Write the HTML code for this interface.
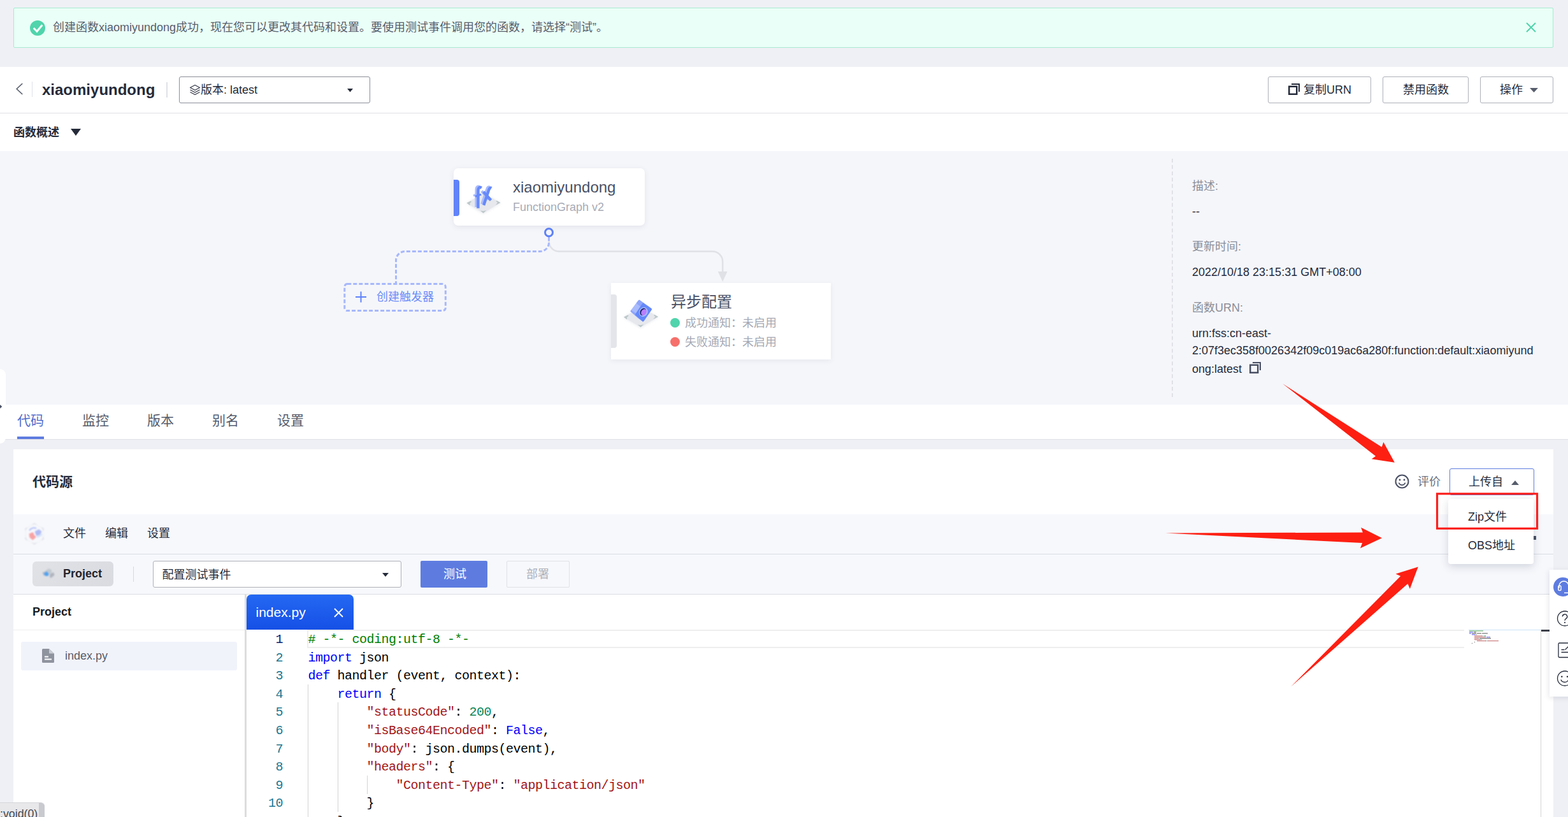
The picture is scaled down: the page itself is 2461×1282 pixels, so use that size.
<!DOCTYPE html>
<html lang="zh-CN">
<head>
<meta charset="utf-8">
<title>FunctionGraph</title>
<style>
*{box-sizing:border-box;margin:0;padding:0}
html,body{width:2461px;height:1282px;overflow:hidden}
body{position:relative;background:#eff0f5;font-family:"Liberation Sans","Noto Sans CJK SC",sans-serif;color:#252b3a;font-size:18px;line-height:1}
.a{position:absolute}
.t{position:absolute;white-space:nowrap;line-height:24px;height:24px}
.btn{position:absolute;top:120px;height:42px;border:1px solid #adb0b8;border-radius:3px;background:#fff}
svg{position:absolute;overflow:visible}
/* banner */
#banner{left:21px;top:12px;width:2417px;height:63px;background:#eafff7;border:1px solid #a8e9d2;border-radius:2px}
/* header */
#hdr{left:0;top:105px;width:2461px;height:73px;background:#fff;border-bottom:1px solid #dfe1e6}
#sec{left:0;top:178px;width:2461px;height:59px;background:#fff}
#ov{left:0;top:237px;width:2461px;height:398px;background:#f5f6fa}
#tabs{left:0;top:635px;width:2461px;height:55px;background:#fff;border-bottom:1px solid #dfe1e6}
#card{left:21px;top:705px;width:2417px;height:600px;background:#fff}
#menubar{left:21px;top:807px;width:2417px;height:63px;background:#f7f8fc;border-bottom:1px solid #d9dde3}
#toolbar{left:21px;top:870px;width:2417px;height:63px;background:#f7f8fc;border-bottom:1px solid #d9dde3}
.code{position:absolute;left:483.5px;font-family:"Liberation Mono",monospace;font-size:20px;letter-spacing:-0.5px;white-space:pre;line-height:28px;height:28px;color:#000}
.ln{position:absolute;left:394px;width:50px;text-align:right;font-family:"Liberation Mono",monospace;font-size:20px;letter-spacing:-0.5px;line-height:28px;height:28px;color:#237893}
.k{color:#0000ff}.s{color:#a31515}.c{color:#008000}.n{color:#098658}
</style>
</head>
<body>
<!-- banner -->
<div class="a" id="banner"></div>
<svg style="left:47px;top:32px" width="24" height="24" viewBox="0 0 24 24"><circle cx="12" cy="12" r="12" fill="#50d4ab"/><path d="M5.8 12l5.2 5.3 8.3-10" fill="none" stroke="#fff" stroke-width="3"/></svg>
<div class="t" style="left:83px;top:31px;color:#575d6c">创建函数</div><div class="t" style="left:155px;top:31px;color:#575d6c">xiaomiyundong</div><div class="t" style="left:276.08px;top:31px;color:#575d6c">成功，现在您可以更改其代码和设置。要使用测试事件调用您的函数，请选择</div><div class="t" style="left:888.08px;top:31px;color:#575d6c">“</div><div class="t" style="left:894.06px;top:31px;color:#575d6c">测试</div><div class="t" style="left:930.06px;top:31px;color:#575d6c">”</div><div class="t" style="left:936.06px;top:31px;color:#575d6c">。</div>
<svg style="left:2395px;top:35px" width="16" height="16" viewBox="0 0 16 16"><path d="M1 1l14 14M15 1L1 15" stroke="#50d4ab" stroke-width="2" fill="none"/></svg>

<!-- header -->
<div class="a" id="hdr"></div>
<svg style="left:24px;top:130px" width="14" height="20" viewBox="0 0 14 20"><path d="M11.2 1L2.2 9.5l9 8.5" fill="none" stroke="#575d6c" stroke-width="1.6"/></svg>
<div class="a" style="left:50px;top:128px;width:1px;height:24px;background:#dfe1e6"></div>
<div class="t" style="left:66px;top:126px;font-size:24px;font-weight:bold;line-height:30px;height:30px;color:#252b3a">xiaomiyundong</div>
<div class="a" style="left:260.5px;top:129px;width:2px;height:24px;background:#dfe1e6"></div>
<div class="btn" style="left:281px;width:300px;border-color:#8a8e99"></div>
<svg style="left:297px;top:132px" width="18" height="18" viewBox="0 0 18 18"><path d="M9 1.5L1.5 5.5 9 9.5l7.5-4zM1.5 9L9 13l7.5-4M1.5 12.5L9 16.5l7.5-4" fill="none" stroke="#353a48" stroke-width="1.25" stroke-linejoin="round"/></svg>
<div class="t" style="left:315px;top:129px">版本</div><div class="t" style="left:351px;top:129px">:</div>
<div class="t" style="left:361px;top:129px">latest</div>
<svg style="left:544.5px;top:138.5px" width="9" height="5.5" viewBox="0 0 10 6"><path d="M0 0h10L5 6z" fill="#252b3a"/></svg>

<div class="btn" style="left:1990px;width:162px"></div>
<svg style="left:2022px;top:131px" width="18" height="18" viewBox="0 0 18 18"><path d="M5 1h12v12" fill="none" stroke="#252b3a" stroke-width="2"/><rect x="1.25" y="4.75" width="12" height="12" fill="none" stroke="#252b3a" stroke-width="2.5"/></svg>
<div class="t" style="left:2046px;top:129px">复制</div><div class="t" style="left:2082px;top:129px">URN</div>
<div class="btn" style="left:2170px;width:135px"></div>
<div class="t" style="left:2202px;top:129px">禁用函数</div>
<div class="btn" style="left:2323px;width:115px"></div>
<div class="t" style="left:2354px;top:129px">操作</div>
<svg style="left:2401px;top:138px" width="13" height="7" viewBox="0 0 13 7"><path d="M0 0h13L6.5 7z" fill="#575d6c"/></svg>

<!-- section title -->
<div class="a" id="sec"></div>
<div class="t" style="left:21px;top:196px;font-weight:bold">函数概述</div>
<svg style="left:111px;top:202px" width="16" height="11" viewBox="0 0 16 11"><path d="M0 0h16L8 11z" fill="#252b3a"/></svg>

<!-- overview -->
<div class="a" id="ov"></div>

<!-- overview graph -->
<svg style="left:0;top:0" width="2461" height="1282" viewBox="0 0 2461 1282">
  <path d="M861.5 372V378.5a16 16 0 0 0 16 16H1118.2a16 16 0 0 1 16 16V428" fill="none" stroke="#dfe1e6" stroke-width="2.5"/>
  <path d="M861.5 372V380.5a14 14 0 0 1 -14 14H635.5a14 14 0 0 0 -14 14V444" fill="none" stroke="#a7b8fb" stroke-width="3" stroke-dasharray="6 3"/>
  <path d="M1126.8 426h14.8l-7.4 16z" fill="#dfe1e6"/>
  <rect x="540.8" y="445.6" width="158.5" height="42" rx="4.5" fill="none" stroke="#a7b8fb" stroke-width="3" stroke-dasharray="6 3"/>
  <path d="M558 466h17M566.5 457.5v17" stroke="#5e82f8" stroke-width="2" fill="none"/>
  <circle cx="861.5" cy="364.7" r="6" fill="#f5f6fa" stroke="#5e82f8" stroke-width="3"/>
</svg>
<div class="t" style="left:591px;top:454px;color:#6b8cf9">创建触发器</div>

<div class="a" style="left:712px;top:264px;width:300px;height:90px;background:#fff;border-radius:7px;box-shadow:0 2px 8px rgba(60,70,100,.10)"></div>
<div class="a" style="left:712px;top:282px;width:9px;height:57px;background:#6083f9;border-radius:0 4px 4px 0"></div>
<div class="t" style="left:805px;top:279px;font-size:24px;line-height:30px;height:30px;color:#4a5064">xiaomiyundong</div>
<div class="t" style="left:805px;top:313px;color:#a7abb6">FunctionGraph v2</div>

<div class="a" style="left:959px;top:444px;width:345px;height:120px;background:#fff;box-shadow:0 2px 8px rgba(60,70,100,.08)"></div>
<div class="a" style="left:959px;top:462px;width:9px;height:84px;background:#e3e5ea;border-radius:0 4px 4px 0"></div>
<div class="t" style="left:1053px;top:459px;font-size:24px;line-height:30px;height:30px;color:#4a5064">异步配置</div>
<div class="a" style="left:1052px;top:499px;width:15px;height:15px;border-radius:50%;background:#50d4ab"></div>
<div class="a" style="left:1052px;top:529px;width:15px;height:15px;border-radius:50%;background:#f66f6a"></div>
<div class="t" style="left:1075px;top:495px;color:#a5a9b4">成功通知：未启用</div>
<div class="t" style="left:1075px;top:525px;color:#a5a9b4">失败通知：未启用</div>


<!-- fx icon -->
<svg style="left:725px;top:280px" width="70" height="65" viewBox="0 0 70 65">
  <defs><filter id="bl"><feGaussianBlur stdDeviation="2.2"/></filter></defs>
  <path d="M7 39L34 24 61 38.5 33.5 55.5z" fill="#dfe2e8" filter="url(#bl)" opacity=".7"/>
  <path d="M7.5 38.5L34 23.5 60.5 38 33.5 54.5z" fill="#e6e8ed"/>
  <path d="M7.5 38.5l6.5-3.3 1 1.5-2.5 2.2 .2 3.6z" fill="#bcc7c9"/>
  <path d="M60.5 38l-6-3.2-.8 1.3 2.3 2-3.3 3.9z" fill="#bcc7c9"/>
  <path d="M33.5 54.5l-4.5-4 4.3.8 5-1.3z" fill="#bcc7c9"/>
  <g fill="none" stroke-linejoin="round">
    <g transform="translate(-2.8 -1.2)" stroke="#a9bbfc">
      <path d="M30.8 14.8C28 13 25.5 14.5 25.5 19L25.4 46.3" stroke-width="4.4"/>
      <path d="M20.8 28.2L30.2 24.9" stroke-width="3.2"/>
      <path d="M46.5 15C43.5 13.5 42.6 17 41.6 20L34.2 41.6" stroke-width="4.4"/>
      <path d="M33.8 21L45.5 34.3" stroke-width="4.4"/>
    </g>
    <g stroke="#6689fa">
      <path d="M30.8 14.8C28 13 25.5 14.5 25.5 19L25.4 46.8" stroke-width="4.4"/>
      <path d="M20.8 28.2L30.2 24.9" stroke-width="3.2"/>
      <path d="M46.5 15C43.5 13.5 42.6 17 41.6 20L34.2 42" stroke-width="4.4"/>
      <path d="M33.8 21L45.5 34.3" stroke-width="4.4"/>
    </g>
  </g>
</svg>
<!-- async icon -->
<svg style="left:972px;top:460px" width="70" height="65" viewBox="0 0 70 65">
  <path d="M6.5 38L34 23 61.5 37.5 33.5 54.5z" fill="#dfe2e8" filter="url(#bl)" opacity=".7"/>
  <path d="M7 37.5L34 22.5 61 37 33.5 53.5z" fill="#e6e8ed"/>
  <path d="M7 37.5l6.5-3.3 1 1.5-2.5 2.2 .2 3.6z" fill="#bcc7c9"/>
  <path d="M61 37l-6-3.2-.8 1.3 2.3 2-3.3 3.9z" fill="#bcc7c9"/>
  <path d="M33.5 53.5l-4.5-4 4.3.8 5-1.3z" fill="#bcc7c9"/>
  <g stroke-linejoin="round" stroke-width="3">
    <path d="M31.2 12L37.5 16.5 49.5 25.2 37.2 43 30.5 38.2 19 28.2z" fill="#a9bbfc" stroke="#a9bbfc"/>
    <path d="M37.2 43L25.8 33.3 19 28.2 30.5 38.2z" fill="#8ea5fa" stroke="#8ea5fa" stroke-width="2.5"/>
    <path d="M31.2 12L37.5 16.5 34.8 20.5 28.2 15.8z" fill="#8ea5fa" stroke="#8ea5fa" stroke-width="2.5"/>
    <path d="M37.6 17.3L49.3 25.3 37.2 42.8 26.8 33.4z" fill="#6488fa" stroke="#6488fa" stroke-width="3.4"/>
  </g>
  <ellipse cx="37.8" cy="29.5" rx="6.6" ry="7.6" transform="rotate(30 37.8 29.5)" fill="#a9bbfc"/>
  <ellipse cx="37.2" cy="29.3" rx="4.6" ry="6" transform="rotate(30 37.2 29.3)" fill="#1f2470"/>
  <ellipse cx="38.5" cy="30" rx="4" ry="5.2" transform="rotate(30 38.5 30)" fill="#b97dff"/>
</svg>
<!-- info panel -->
<div class="a" style="left:1839px;top:249px;width:0;height:374px;border-left:2px dashed #dfe1e6"></div>
<div class="t" style="left:1871px;top:280px;color:#8a8e99">描述</div><div class="t" style="left:1907px;top:280px;color:#8a8e99">:</div>
<div class="t" style="left:1871px;top:320px">--</div>
<div class="t" style="left:1871px;top:375px;color:#8a8e99">更新时间</div><div class="t" style="left:1943px;top:375px;color:#8a8e99">:</div>
<div class="t" style="left:1871px;top:415px">2022/10/18 23:15:31 GMT+08:00</div>
<div class="t" style="left:1871px;top:471px;color:#8a8e99">函数</div><div class="t" style="left:1907px;top:471px;color:#8a8e99">URN:</div>
<div class="t" style="left:1871px;top:511px">urn:fss:cn-east-</div>
<div class="t" style="left:1871px;top:538px">2:07f3ec358f0026342f09c019ac6a280f:function:default:xiaomiyund</div>
<div class="t" style="left:1871px;top:567px">ong:latest</div>
<svg style="left:1961px;top:568px" width="18" height="18" viewBox="0 0 18 18"><path d="M5 1h12v12" fill="none" stroke="#4a5064" stroke-width="2"/><rect x="1.25" y="4.75" width="12" height="12" fill="none" stroke="#4a5064" stroke-width="2.5"/></svg>
<div class="a" id="tabs"></div>

<!-- left handle -->
<div class="a" style="left:-10px;top:579px;width:19px;height:117px;background:#fff;border-radius:0 9px 9px 0"></div>
<svg style="left:0;top:635px" width="4" height="6" viewBox="0 0 4 6"><path d="M0 0l3.3 3L0 6z" fill="#4a5064"/></svg>
<!-- tabs -->
<div class="t" style="left:27px;top:647px;font-size:21px;line-height:26px;height:26px;color:#526ecc">代码</div>
<div class="t" style="left:129px;top:647px;font-size:21px;line-height:26px;height:26px;color:#575d6c">监控</div>
<div class="t" style="left:231px;top:647px;font-size:21px;line-height:26px;height:26px;color:#575d6c">版本</div>
<div class="t" style="left:333px;top:647px;font-size:21px;line-height:26px;height:26px;color:#575d6c">别名</div>
<div class="t" style="left:435px;top:647px;font-size:21px;line-height:26px;height:26px;color:#575d6c">设置</div>
<div class="a" style="left:27px;top:685px;width:42px;height:4px;background:#5e7ce0"></div>
<div class="a" id="card"></div>
<div class="t" style="left:51px;top:743px;font-size:21px;font-weight:bold;line-height:26px;height:26px;color:#252b3a">代码源</div>
<svg style="left:2189px;top:744px" width="23" height="23" viewBox="0 0 23 23"><circle cx="11.5" cy="11.5" r="10" fill="none" stroke="#4a5064" stroke-width="2"/><circle cx="8" cy="9" r="1.4" fill="#4a5064"/><circle cx="15" cy="9" r="1.4" fill="#4a5064"/><path d="M6.5 13.5a5.3 5.3 0 0 0 10 0" fill="none" stroke="#4a5064" stroke-width="1.8"/></svg>
<div class="t" style="left:2225px;top:744px;color:#6b7080">评价</div>
<div class="a" style="left:2275px;top:735px;width:133px;height:42px;border:1px solid #5e7ce0;border-radius:3px;background:#fff"></div>
<div class="t" style="left:2305px;top:744px;color:#252b3a">上传自</div>
<svg style="left:2372px;top:754px" width="12" height="7" viewBox="0 0 12 7"><path d="M0 7h12L6 0z" fill="#575d6c"/></svg>

<div class="a" id="menubar"></div>

<svg style="left:36px;top:818px" width="38" height="40" viewBox="0 0 38 40">
  <defs><filter id="b1"><feGaussianBlur stdDeviation="0.8"/></filter></defs>
  <g filter="url(#b1)">
  <path d="M18 3.5L31.8 11.5V28L18 35.7 4.3 28V11.5z" fill="none" stroke="#eeeff3" stroke-width="1"/>
  <path d="M15 5.2L18 3.5l3 1.7M29.2 10l2.6 1.5v3M31.8 25v3l-2.6 1.5M21 34L18 35.7 15 34M6.9 29.5L4.3 28v-3M4.3 14.5v-3L6.9 10" fill="none" stroke="#dcdde3" stroke-width="1.4"/>
  <path d="M10 14.5c3-4 7-5 11-3.5" fill="none" stroke="#9db0f8" stroke-width="2" opacity=".8"/>
  <path d="M9.5 19.5l6.5-2.5 2 5 3 2.5-5.5 5-5-4z" fill="#f87575" opacity=".65"/>
  <path d="M18.5 16l6.5-3.5 4.5 3.5-2.5 5.5-6 1.5z" fill="#8b9af0" opacity=".65"/>
  <path d="M22 25l8-4.5" stroke="#cfe0fb" stroke-width="3" opacity=".8"/>
  </g>
</svg>
<div class="t" style="left:99px;top:825px;color:#252b3a">文件</div>
<div class="t" style="left:165px;top:825px;color:#252b3a">编辑</div>
<div class="t" style="left:231px;top:825px;color:#252b3a">设置</div>
<div class="a" style="left:2407px;top:841px;width:4px;height:6px;background:#4a5064"></div>

<div class="a" id="toolbar"></div>
<div class="a" style="left:51px;top:881px;width:127px;height:39px;background:linear-gradient(135deg,#e0e2e6,#d9dbe0);border-radius:6px"></div>

<svg style="left:63px;top:888px" width="26" height="24" viewBox="0 0 26 24">
  <g filter="url(#b1)">
  <path d="M8.5 7.5l5-3.5 4.5 2.5v4l-5 3.5-4.5-2.5z" fill="#c4cbd0"/>
  <path d="M3.5 10.5l5-2 .5 5.5-3 1.5z" fill="#b3b7c1"/>
  <path d="M15.5 12.5l5.5-2.5 1.5 4.5-5.5 4.5-2-1.5z" fill="#b0b4be"/>
  <path d="M6.5 11l4-2.5 3 3.5-.5 3.5-4 .5-3-2.5z" fill="#4ea2ee"/>
  </g>
</svg>
<div class="t" style="left:99px;top:888px;font-weight:bold;color:#1f242e">Project</div>
<div class="a" style="left:209px;top:889px;width:1px;height:24px;background:#d5d8df"></div>
<div class="a" style="left:240px;top:880px;width:390px;height:42px;border:1px solid #adb0b8;border-radius:3px;background:#fff"></div>
<div class="t" style="left:254.5px;top:890px;color:#252b3a">配置测试事件</div>
<svg style="left:600px;top:899px" width="10" height="6" viewBox="0 0 10 6"><path d="M0 0h10L5 6z" fill="#252b3a"/></svg>
<div class="a" style="left:660px;top:880px;width:105px;height:42px;background:#5e7ce0;border-radius:2px"></div>
<div class="t" style="left:696px;top:889px;color:#fff">测试</div>
<div class="a" style="left:795px;top:880px;width:99px;height:42px;border:1px solid #dfe1e6;border-radius:2px;background:#f7f8fc"></div>
<div class="t" style="left:826px;top:889px;color:#adb0b8">部署</div>

<!-- left panel -->
<div class="t" style="left:51px;top:948px;font-weight:bold;color:#1a1a1a">Project</div>
<div class="a" style="left:21px;top:988px;width:363px;height:1px;background:#eeeeee"></div>
<div class="a" style="left:33px;top:1007px;width:339px;height:45px;background:#f1f3fb;border-radius:3px"></div>
<svg style="left:66px;top:1018px" width="19" height="22" viewBox="0 0 19 22"><path d="M1.5 0H11l8 7.5V20.5A1.5 1.5 0 0 1 17.5 22h-16A1.5 1.5 0 0 1 0 20.5v-19A1.5 1.5 0 0 1 1.5 0z" fill="#8f939e"/><path d="M11 0v6.5a1 1 0 0 0 1 1h7z" fill="#c9ccd3"/><path d="M4 12.5h6M4 16.5h11" stroke="#fff" stroke-width="1.8"/></svg>
<div class="t" style="left:102px;top:1017px;color:#575d6c">index.py</div>
<div class="a" style="left:384px;top:933px;width:3px;height:360px;background:#dddddd"></div>
<!-- editor tab -->
<div class="a" style="left:387px;top:933px;width:168px;height:55px;border-radius:7px 7px 0 0;background:linear-gradient(#2468f2,#1650e6)"></div>
<div class="t" style="left:401.5px;top:948px;font-size:21px;line-height:26px;height:26px;color:#fff">index.py</div>
<svg style="left:523.5px;top:953.5px" width="15" height="15" viewBox="0 0 15 15"><path d="M1 1l13 13M14 1L1 14" stroke="#fff" stroke-width="2" fill="none"/></svg>
<!-- editor -->
<div class="a" style="left:482px;top:988px;width:1816px;height:28.5px;border:2.5px solid #eeeeee;border-right:0"></div>
<div class="a" style="left:2305px;top:988px;width:114px;height:1px;background:#c9e2f6"></div>
<div class="a" style="left:2418px;top:988px;width:1px;height:300px;background:#d4d4d4"></div>
<div class="a" style="left:2419px;top:988px;width:13px;height:3px;background:#3c4049"></div>
<div class="a" style="left:483px;top:1074px;width:1px;height:220px;background:#d3d3d3"></div>
<div class="a" style="left:529.5px;top:1102px;width:1px;height:172px;background:#d3d3d3"></div>
<div class="a" style="left:576px;top:1216.5px;width:1px;height:29px;background:#d3d3d3"></div>
<div class="ln" style="top:990.0px;color:#0b216f">1</div><div class="code" style="top:990.0px"><span class="c"># -*- coding:utf-8 -*-</span></div>
<div class="ln" style="top:1018.6px">2</div><div class="code" style="top:1018.6px"><span class="k">import</span> json</div>
<div class="ln" style="top:1047.2px">3</div><div class="code" style="top:1047.2px"><span class="k">def</span> handler (event, context):</div>
<div class="ln" style="top:1075.8px">4</div><div class="code" style="top:1075.8px">    <span class="k">return</span> {</div>
<div class="ln" style="top:1104.4px">5</div><div class="code" style="top:1104.4px">        <span class="s">"statusCode"</span>: <span class="n">200</span>,</div>
<div class="ln" style="top:1133.0px">6</div><div class="code" style="top:1133.0px">        <span class="s">"isBase64Encoded"</span>: <span class="k">False</span>,</div>
<div class="ln" style="top:1161.6px">7</div><div class="code" style="top:1161.6px">        <span class="s">"body"</span>: json.dumps(event),</div>
<div class="ln" style="top:1190.2px">8</div><div class="code" style="top:1190.2px">        <span class="s">"headers"</span>: {</div>
<div class="ln" style="top:1218.8px">9</div><div class="code" style="top:1218.8px">            <span class="s">"Content-Type"</span>: <span class="s">"application/json"</span></div>
<div class="ln" style="top:1247.4px">10</div><div class="code" style="top:1247.4px">        }</div>
<div class="ln" style="top:1276.0px">11</div><div class="code" style="top:1276.0px">    }</div>

<svg style="left:2306px;top:988.5px" width="60" height="24" viewBox="0 0 60 24" opacity=".55"><rect x="0" y="0.40" width="22" height="1.2" fill="#008000"/><rect x="0" y="2.35" width="6" height="1.2" fill="#0000ff"/><rect x="7" y="2.35" width="4" height="1.2" fill="#000"/><rect x="0" y="4.30" width="3" height="1.2" fill="#0000ff"/><rect x="4" y="4.30" width="7" height="1.2" fill="#000"/><rect x="12" y="4.30" width="7" height="1.2" fill="#000"/><rect x="20" y="4.30" width="9" height="1.2" fill="#000"/><rect x="4" y="6.25" width="6" height="1.2" fill="#0000ff"/><rect x="11" y="6.25" width="1" height="1.2" fill="#000"/><rect x="8" y="8.20" width="12" height="1.2" fill="#a31515"/><rect x="20" y="8.20" width="1" height="1.2" fill="#000"/><rect x="22" y="8.20" width="3" height="1.2" fill="#098658"/><rect x="25" y="8.20" width="1" height="1.2" fill="#000"/><rect x="8" y="10.15" width="17" height="1.2" fill="#a31515"/><rect x="25" y="10.15" width="1" height="1.2" fill="#000"/><rect x="27" y="10.15" width="5" height="1.2" fill="#0000ff"/><rect x="32" y="10.15" width="1" height="1.2" fill="#000"/><rect x="8" y="12.10" width="6" height="1.2" fill="#a31515"/><rect x="14" y="12.10" width="1" height="1.2" fill="#000"/><rect x="16" y="12.10" width="18" height="1.2" fill="#000"/><rect x="8" y="14.05" width="9" height="1.2" fill="#a31515"/><rect x="17" y="14.05" width="1" height="1.2" fill="#000"/><rect x="19" y="14.05" width="1" height="1.2" fill="#000"/><rect x="12" y="16.00" width="14" height="1.2" fill="#a31515"/><rect x="26" y="16.00" width="1" height="1.2" fill="#000"/><rect x="28" y="16.00" width="18" height="1.2" fill="#a31515"/><rect x="8" y="17.95" width="1" height="1.2" fill="#000"/><rect x="4" y="19.90" width="1" height="1.2" fill="#000"/></svg>
<!-- dropdown -->
<div class="a" style="left:2273px;top:783px;width:134px;height:102px;background:#fff;border-radius:4px;box-shadow:0 4px 14px rgba(40,50,80,.18)"></div>
<div class="t" style="left:2304px;top:799px;color:#252b3a">Zip</div><div class="t" style="left:2329px;top:799px;color:#252b3a">文件</div>
<div class="t" style="left:2304px;top:844px;color:#252b3a">OBS</div><div class="t" style="left:2342px;top:844px;color:#252b3a">地址</div>
<!-- annotations -->
<svg style="left:0;top:0" width="2461" height="1282" viewBox="0 0 2461 1282">
  <rect x="2255.6" y="774.8" width="157" height="54.5" fill="none" stroke="#fb1f1c" stroke-width="3.2"/>
  <path d="M2013 602L2168.7 701.5 2171.4 693.8 2188.9 725.8 2152.7 720.3 2159.1 715.8z" fill="#fd1f12"/>
  <path d="M1829.3 836.6L2138.9 835.5 2136.1 827.8 2169 844.3 2135 860.2 2138.1 852z" fill="#fd1f12"/>
  <path d="M2026 1077.6L2198.2 904 2190.6 900.5 2225.8 889.4 2212.9 924 2209.5 916z" fill="#fd1f12"/>
</svg>
<!-- floating widget -->
<div class="a" style="left:2432px;top:894px;width:40px;height:199px;background:#fff;box-shadow:-1px 2px 8px rgba(40,50,80,.12)"></div>
<div class="a" style="left:2438px;top:906px;width:30px;height:30px;border-radius:50%;background:#5e7ce0"></div>
<svg style="left:2438px;top:906px" width="30" height="30" viewBox="0 0 30 30"><path d="M9 17v-3.5a7.5 7.5 0 0 1 15 0" fill="none" stroke="#fff" stroke-width="1.6"/><rect x="7.8" y="13" width="4.2" height="7.5" rx="1.8" fill="none" stroke="#fff" stroke-width="1.4"/><path d="M17 24.3h6" stroke="#fff" stroke-width="1.4"/></svg>
<svg style="left:2443px;top:958px" width="26" height="26" viewBox="0 0 26 26"><circle cx="13" cy="12.5" r="11.5" fill="none" stroke="#252b3a" stroke-width="1.3"/><path d="M9.3 9.6a3.7 3.7 0 1 1 5.2 3.4c-1 .6-1.5 1.3-1.5 2.8" fill="none" stroke="#252b3a" stroke-width="1.4"/><circle cx="13" cy="18.8" r="1.1" fill="#252b3a"/></svg>
<svg style="left:2445px;top:1008px" width="26" height="26" viewBox="0 0 26 26"><rect x="1" y="1" width="24" height="22.5" rx="1.5" fill="none" stroke="#252b3a" stroke-width="1.3"/><path d="M5.5 11.5h5M5.5 15.5h12M11.5 11.5l5-5" stroke="#252b3a" stroke-width="1.3" fill="none"/></svg>
<svg style="left:2443px;top:1052px" width="26" height="26" viewBox="0 0 26 26"><circle cx="13" cy="12.5" r="11.5" fill="none" stroke="#252b3a" stroke-width="1.3"/><circle cx="8.3" cy="9.8" r="1.2" fill="#252b3a"/><circle cx="17" cy="9.8" r="1.2" fill="#252b3a"/><path d="M6.8 14.5a6.5 6.5 0 0 0 12 0" fill="none" stroke="#252b3a" stroke-width="1.3"/></svg>
<!-- status bubble -->
<div class="a" style="left:-10px;top:1259px;width:79.5px;height:30px;background:#e8e8ea;border-top:1px solid #d5d6da;border-radius:0 6px 0 0;overflow:hidden"><div class="a" style="right:0;top:0;width:8.5px;height:30px;background:#c9cacf"></div></div>
<div class="t" style="left:0px;top:1264px;font-size:17.8px;line-height:26px;height:26px;color:#454952">:void(0)</div>

</body>
</html>
